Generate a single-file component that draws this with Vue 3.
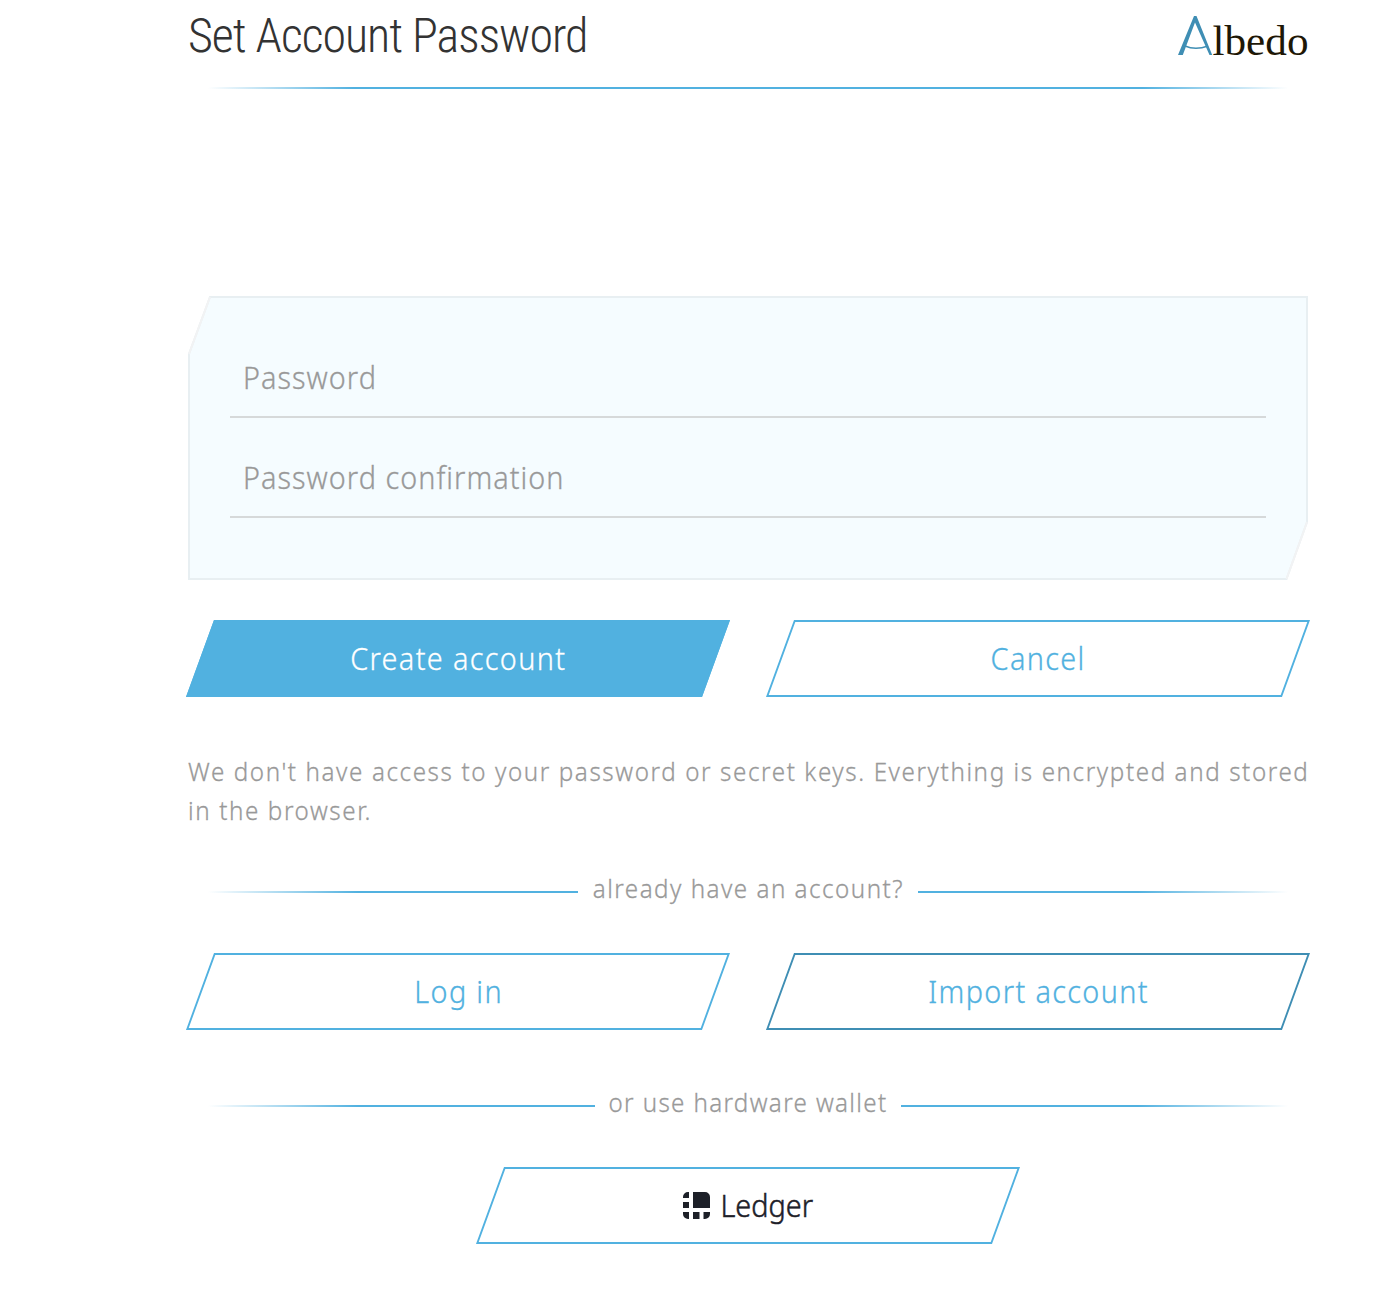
<script setup>
const fields = ['Password', 'Password confirmation']
</script>

<template>
  <main class="page">
    <header class="header">
      <h1 class="title"><span>Set Account Password</span></h1>
      <svg class="logo" width="136" height="56" viewBox="0 0 136 56" role="img" aria-label="Albedo">
        <path d="M0 41L16 2H18.500L34.200 41H31.500L17 8.500L4.800 41Z" fill="#3f8eb4" />
        <path d="M7 32Q17.500 36.500 30 32" fill="none" stroke="#3f8eb4" stroke-width="1.500" />
        <text x="34.500" y="41" textLength="96" lengthAdjust="spacingAndGlyphs">lbedo</text>
      </svg>
    </header>
    <div class="rule"></div>

    <form class="panel" @submit.prevent>
      <svg class="panel-bg" width="1120" height="284" viewBox="0 0 1120 284" aria-hidden="true">
        <path d="M22 1H1119V226L1098.500 283H1V58Z" fill="#f5fcff" stroke="#e8eff2" stroke-width="2" />
        <path d="M1 58L22 1M1119 226L1098.500 283" stroke="#f2f3f4" stroke-width="2" />
      </svg>
      <label v-for="f in fields" :key="f" class="field"><span class="t">{{ f }}</span></label>
    </form>

    <div class="buttons">
      <button class="btn primary"><span class="t">Create account</span></button>
      <button class="btn"><span class="t">Cancel</span></button>
    </div>

    <p class="note">
      <span class="line t">We don't have access to your password or secret keys. Everything is encrypted and stored</span>
      <span class="line t">in the browser.</span>
    </p>

    <div class="divider already"><i></i><div class="label"><span class="t">already have an account?</span></div><i></i></div>
    <div class="buttons">
      <button class="btn"><span class="t">Log in</span></button>
      <button class="btn dark"><span class="t">Import account</span></button>
    </div>
    <div class="divider hardware"><i></i><div class="label"><span class="t">or use hardware wallet</span></div><i></i></div>
    <div class="buttons single">
      <button class="btn" aria-label="Ledger">
        <svg class="ledger" width="144" height="60" viewBox="-6 -13 144 60">
          <path d="M7 1V7H1V6A5 5 0 0 1 6 1ZM11 1H23A5 5 0 0 1 28 6V17H11ZM1 11H7V17H1ZM1 21H7V28H6A5 5 0 0 1 1 23ZM11 21H17.500V28H11ZM21.500 21H28V23A5 5 0 0 1 23 28H21.500Z" fill="#1d2028" />
          <text x="38.500" y="26" textLength="92.500" lengthAdjust="spacingAndGlyphs">Ledger</text>
        </svg>
      </button>
    </div>
  </main>
</template>

<style>
body { margin: 0; background: #fff; }
</style>

<style scoped>
.page { box-sizing: border-box; width: 1120px; height: 1292px; margin-left: 188px; font-family: "Noto Sans", sans-serif; font-weight: 300; color: #999; }
.t { display: inline-block; transform: scaleX(.93); -webkit-text-stroke: .3px currentColor; }
.header { height: 87px; display: flex; justify-content: space-between; align-items: flex-start; }
.title { margin: 8px 0 0; font: 300 48px/56px "Roboto Condensed", Roboto, sans-serif; font-stretch: 75%; color: #333; white-space: nowrap; letter-spacing: -1px; }
.logo { margin: 14px -6px 0 0; }
.logo text { font: 400 42px "Liberation Serif", serif; fill: #1e1706; }
.rule { height: 2px; margin: 0 20px; background: linear-gradient(90deg, transparent, #51b1e0 13.5%, #51b1e0 86.5%, transparent); }
.panel { position: relative; box-sizing: border-box; height: 284px; margin-top: 207px; padding: 22px 42px 0; }
.panel-bg { position: absolute; inset: 0; }
.field { position: relative; box-sizing: border-box; display: flex; align-items: flex-end; height: 100px; padding: 0 0 18px 13px; border-bottom: 2px solid #d6d9da; font-size: 31px; line-height: 42px; letter-spacing: 1.1px; white-space: nowrap; }
.field .t { transform-origin: left; }
.buttons { display: flex; justify-content: space-between; height: 77px; padding: 0 12px; margin-top: 40px; }
.btn { position: relative; width: 516px; height: 77px; padding: 0 0 2px 1px; border: 0; background: none; display: flex; align-items: center; justify-content: center; font: inherit; font-size: 31px; line-height: 42px; letter-spacing: 1.45px; color: #51b1e0; white-space: nowrap; }
.btn::before { content: ""; position: absolute; inset: 0; box-sizing: border-box; border: 2px solid #51b1e0; transform: skewX(-20deg); }
.btn > * { position: relative; }
.primary { color: #fff; }
.primary::before { background: #51b1e0; }
.dark::before { border-color: #3f8eb4; }
.note { height: 78px; margin: 55px 0 0; font-size: 26px; line-height: 39px; letter-spacing: 1.72px; white-space: nowrap; }
.line { display: block; width: max-content; transform-origin: left; }
.divider { display: flex; align-items: center; height: 36px; padding: 0 20px; font-size: 26px; line-height: 36px; letter-spacing: 1.6px; }
.label { flex: none; display: flex; justify-content: center; white-space: nowrap; padding-bottom: 8px; }
.divider i { flex: 1; height: 2px; background: linear-gradient(90deg, transparent, #51b1e0 150px); }
.divider i:last-child { background: linear-gradient(270deg, transparent, #51b1e0 150px); }
.already { margin-top: 44px; }
.already .label { width: 340px; }
.already + .buttons { margin-top: 43px; }
.hardware { margin-top: 58px; letter-spacing: 1.45px; }
.hardware .label { width: 306px; }
.hardware + .buttons { margin-top: 43px; }
.single { justify-content: center; }
.single .btn { padding: 4px 0 0; }
.ledger { overflow: visible; }
.ledger text { font: 300 31px "Noto Sans", sans-serif; fill: #1d2028; stroke: #1d2028; stroke-width: .5px; letter-spacing: 0; }
</style>
